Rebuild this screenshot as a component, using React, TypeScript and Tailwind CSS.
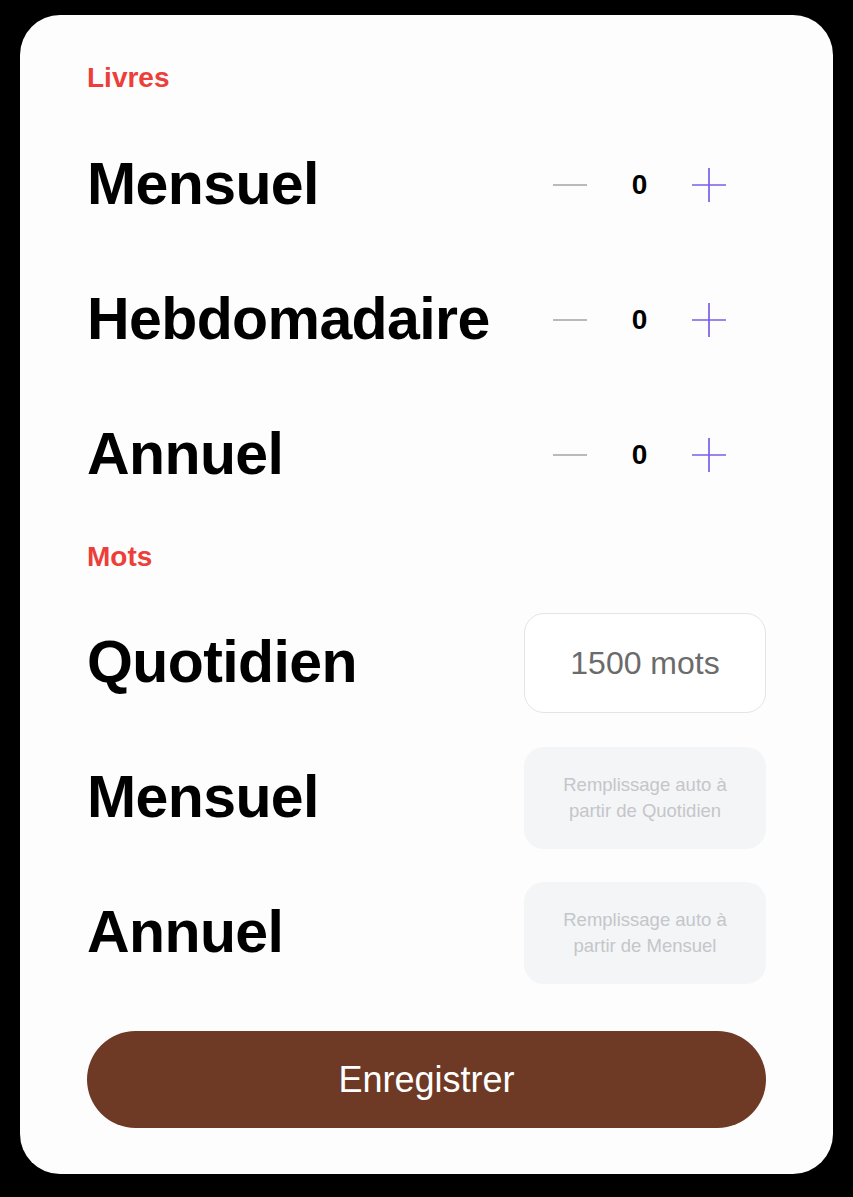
const FONT = { fontFamily: '"Liberation Sans", Arial, sans-serif' };

function Stepper({ value }: { value: number }) {
  return (
    <div className="flex items-center pr-[40px]">
      <svg width="34" height="34" viewBox="0 0 34 34" aria-hidden="true">
        <line x1="0" y1="17" x2="34" y2="17" stroke="#a3a3a3" strokeWidth="1.6" />
      </svg>
      <span className="w-[105px] text-center text-[28px] font-bold text-black">{value}</span>
      <svg width="34" height="34" viewBox="0 0 34 34" aria-hidden="true">
        <line x1="0" y1="17" x2="34" y2="17" stroke="#7b5ce8" strokeWidth="1.7" />
        <line x1="17" y1="0" x2="17" y2="34" stroke="#7b5ce8" strokeWidth="1.7" />
      </svg>
    </div>
  );
}

function Row({ label, children }: { label: string; children: React.ReactNode }) {
  return (
    <div className="flex h-[135px] items-center justify-between">
      <span className="text-[59px] font-bold leading-none tracking-[-0.6px] text-black">{label}</span>
      {children}
    </div>
  );
}

function AutoBox({ text }: { text: string }) {
  return (
    <div className="flex h-[102px] w-[242px] items-center justify-center rounded-[20px] bg-[#f4f5f7] px-5 text-center text-[18.5px] leading-[26px] text-[#c4c6ca]">
      {text}
    </div>
  );
}

export default function App() {
  return (
    <div className="min-h-[1197px] bg-black pt-[15px] pl-[20px]" style={FONT}>
      <div className="flex w-[813px] flex-col rounded-[40px] bg-[#fdfdfd] px-[67px] pt-[47px] pb-[46px]">
        <div className="h-[32px] text-[28px] font-bold leading-[32px] text-[#ec3f3a]">Livres</div>
        <div className="mt-[23px]">
          <Row label="Mensuel">
            <Stepper value={0} />
          </Row>
          <Row label="Hebdomadaire">
            <Stepper value={0} />
          </Row>
          <Row label="Annuel">
            <Stepper value={0} />
          </Row>
        </div>
        <div className="mt-[19px] h-[32px] text-[28px] font-bold leading-[32px] text-[#ec3f3a]">Mots</div>
        <div className="mt-[22px]">
          <Row label="Quotidien">
            <div className="flex h-[100px] w-[242px] items-center justify-center rounded-[20px] border border-[#e3e4e6] bg-white text-[32px] text-[#6b6b6b]">
              1500 mots
            </div>
          </Row>
          <Row label="Mensuel">
            <AutoBox text="Remplissage auto à partir de Quotidien" />
          </Row>
          <Row label="Annuel">
            <AutoBox text="Remplissage auto à partir de Mensuel" />
          </Row>
        </div>
        <button className="mt-[31px] h-[97px] w-full rounded-full bg-[#6e3925] text-[36px] text-white">
          Enregistrer
        </button>
      </div>
    </div>
  );
}
